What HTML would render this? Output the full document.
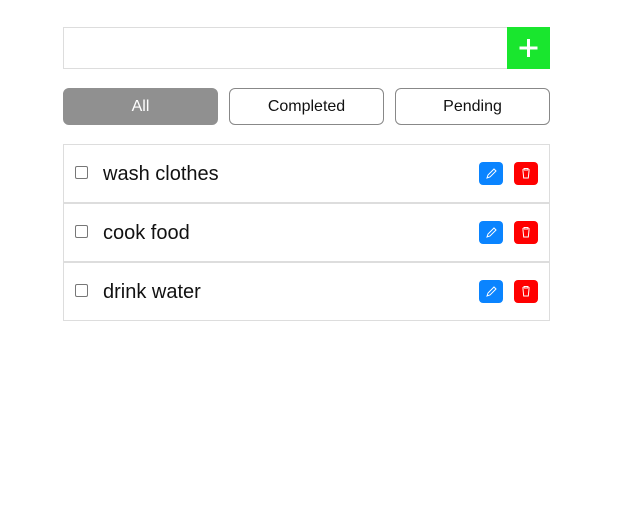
<!DOCTYPE html>
<html><head><style>
body{margin:0;background:#fff;font-family:"Liberation Sans",sans-serif;}
.abs{position:absolute;box-sizing:border-box}
.btn{position:absolute;box-sizing:border-box;top:88px;height:37px;border:1px solid #888;border-radius:6px;text-align:center;line-height:36px;font-size:16px;color:#111;}
.row{position:absolute;left:63px;width:487px;height:59px;border:1px solid #ddd;box-sizing:border-box;}
.cb{position:absolute;left:11px;top:21px;width:13px;height:13px;border:1px solid #777;border-radius:2px;box-sizing:border-box}
.t{position:absolute;left:39px;top:18px;font-size:20px;color:#111}
.e,.d{position:absolute;top:17px;width:24px;height:23px;border-radius:4px}
.e{left:415px;background:#0a84ff}.d{left:450px;background:#f00}
</style></head><body>
<div class="abs" style="left:63px;top:27px;width:445px;height:42px;border:1px solid #ddd"></div>
<div class="abs" style="left:507px;top:27px;width:43px;height:42px;background:#19e62e"><svg width="43" height="42"><path d="M21.5 12v18M12.5 21h18" stroke="#fff" stroke-width="3"/></svg></div>
<div class="btn" style="left:63px;width:155px;background:#909090;border-color:#909090;color:#fff">All</div>
<div class="btn" style="left:229px;width:155px">Completed</div>
<div class="btn" style="left:395px;width:155px">Pending</div>
<div class="row" style="top:144px"><div class="cb"></div><div class="t">wash clothes</div><div class="e"><svg width="24" height="23"><path d="M8 16l1-3 6-6 2 2-6 6z" fill="none" stroke="#fff"/></svg></div><div class="d"><svg width="24" height="23"><path d="M8 8h8M10 8v-1.5h4V8M9 9l.7 7h4.6l.7-7" fill="none" stroke="#fff"/></svg></div></div>
<div class="row" style="top:203px"><div class="cb"></div><div class="t">cook food</div><div class="e"><svg width="24" height="23"><path d="M8 16l1-3 6-6 2 2-6 6z" fill="none" stroke="#fff"/></svg></div><div class="d"><svg width="24" height="23"><path d="M8 8h8M10 8v-1.5h4V8M9 9l.7 7h4.6l.7-7" fill="none" stroke="#fff"/></svg></div></div>
<div class="row" style="top:262px"><div class="cb"></div><div class="t">drink water</div><div class="e"><svg width="24" height="23"><path d="M8 16l1-3 6-6 2 2-6 6z" fill="none" stroke="#fff"/></svg></div><div class="d"><svg width="24" height="23"><path d="M8 8h8M10 8v-1.5h4V8M9 9l.7 7h4.6l.7-7" fill="none" stroke="#fff"/></svg></div></div>
</body></html>
